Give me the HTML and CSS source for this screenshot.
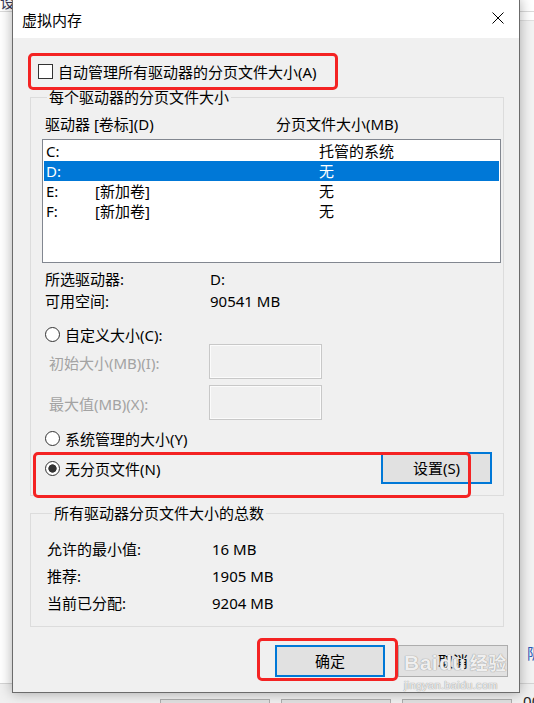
FILE: index.html
```html
<!DOCTYPE html>
<html lang="zh-CN">
<head>
<meta charset="utf-8">
<title>虚拟内存</title>
<link rel="stylesheet" href="styles.css">
</head>
<body>
<div class="screen">
  <div class="bg-head"><span class="bg-glyph">设</span></div>
  <div class="bg-main">
    <div class="bg-right"><span class="bg-link">阪</span></div>
  </div>
  <div class="bg-foot">
    <span class="bg-btn"></span>
    <span class="bg-btn"></span>
    <span class="bg-btn"></span>
    <span class="bg-num">00</span>
  </div>

  <div class="dialog">
    <div class="titlebar">
      <span class="title">虚拟内存</span>
      <svg class="close" width="12" height="12" viewBox="0 0 12 12"><path d="M0.5 0.5L11.5 11.5M11.5 0.5L0.5 11.5" stroke="#000" stroke-width="1" fill="none"/></svg>
    </div>
    <div class="dlg-body">
      <div class="check-row"><span class="checkbox"></span><span>自动管理所有驱动器的分页文件大小(A)</span></div>

      <div class="group group-drives">
        <div class="group-title">每个驱动器的分页文件大小</div>
        <div class="list-head"><span>驱动器 [卷标](D)</span><span>分页文件大小(MB)</span></div>
        <div class="list">
          <div class="list-row"><span>C:</span><span></span><span>托管的系统</span></div>
          <div class="list-row selected"><span>D:</span><span></span><span>无</span></div>
          <div class="list-row"><span>E:</span><span>[新加卷]</span><span>无</span></div>
          <div class="list-row"><span>F:</span><span>[新加卷]</span><span>无</span></div>
        </div>
        <div class="info">
          <span>所选驱动器:</span><span>D:</span>
          <span>可用空间:</span><span>90541 MB</span>
        </div>
        <div class="radio-row r-custom"><span class="radio"></span><span>自定义大小(C):</span></div>
        <div class="field-row"><span class="field-label">初始大小(MB)(I):</span><span class="field-input"></span></div>
        <div class="field-row"><span class="field-label">最大值(MB)(X):</span><span class="field-input"></span></div>
        <div class="radio-row r-system"><span class="radio"></span><span>系统管理的大小(Y)</span></div>
        <div class="radio-row r-none"><span class="radio on"></span><span>无分页文件(N)</span><span class="btn default set-btn">设置(S)</span></div>
      </div>

      <div class="group group-total">
        <div class="group-title">所有驱动器分页文件大小的总数</div>
        <div class="totals">
          <span>允许的最小值:</span><span>16 MB</span>
          <span>推荐:</span><span>1905 MB</span>
          <span>当前已分配:</span><span>9204 MB</span>
        </div>
      </div>

      <div class="actions">
        <span class="btn default">确定</span>
        <span class="btn">取消</span>
      </div>
    </div>
  </div>

  <div class="mark mark-auto"></div>
  <div class="mark mark-none"></div>
  <div class="mark mark-ok"></div>

  <div class="watermark">
    <div class="wm-logo">Bai<span class="wm-du">du</span><span class="wm-jy">经验</span></div>
    <div class="wm-url">jingyan.baidu.com</div>
  </div>
</div>
</body>
</html>
```

FILE: styles.css
```css
* { box-sizing: border-box; }
html, body { margin: 0; padding: 0; }
body {
  font-family: "Noto Sans", "Noto Sans CJK SC", sans-serif;
  font-size: 15px;
  color: #000;
  background: #fff;
}
.screen {
  position: relative;
  width: 534px;
  height: 703px;
  overflow: hidden;
  display: flex;
  flex-direction: column;
  background: #fff;
}

/* underlying window */
.bg-head {
  height: 12px;
  border-bottom: 1px solid #dadada;
  overflow: hidden;
}
.bg-glyph {
  display: block;
  margin-top: -8px;
  line-height: 20px;
  color: #3a3a5a;
}
.bg-main {
  flex: 1;
  display: flex;
  justify-content: flex-end;
}
.bg-right {
  width: 14px;
  background: #f3f3f3;
  border-top: 1px solid #e0e0e0;
  margin-top: 8px;
  display: flex;
  flex-direction: column;
  justify-content: flex-end;
  padding: 0 0 20px 7px;
  overflow: hidden;
}
.bg-link { color: #2a5ab8; line-height: 20px; white-space: nowrap; }
.bg-foot {
  height: 20px;
  border-top: 1px solid #d4d4d4;
  background: #f0f0f0;
  display: flex;
  align-items: flex-start;
  padding: 15px 0 0 160px;
  gap: 11px;
  overflow: hidden;
}
.bg-btn {
  width: 111px;
  height: 20px;
  background: #e1e1e1;
  border: 1px solid #adadad;
}
.bg-num {
  margin: -8px 0 0 auto;
  width: 11px;
  line-height: 20px;
  overflow: hidden;
  color: #222;
}

/* dialog window */
.dialog {
  position: absolute;
  left: 12px;
  top: -1px;
  width: 508px;
  height: 694px;
  border: 1px solid #6b6b6b;
  background: #f0f0f0;
  box-shadow: 0 0 12px rgba(0, 0, 0, 0.32);
  display: flex;
  flex-direction: column;
}
.titlebar {
  height: 38px;
  flex: none;
  background: #fff;
  display: flex;
  justify-content: space-between;
  align-items: flex-start;
  padding: 0 15px 0 9px;
}
.title { line-height: 20px; margin-top: 10px; }
.close { margin-top: 12px; }

.dlg-body {
  flex: 1;
  padding: 23px 11px 0 17px;
}
.check-row {
  display: flex;
  align-items: center;
  height: 20px;
  margin-left: 8px;
  gap: 5px;
}
.checkbox {
  width: 15px;
  height: 15px;
  border: 1px solid #333;
  background: #fff;
}

.group {
  border: 1px solid #dcdcdc;
  margin-right: 4px;
}
.group-title {
  display: block;
  width: fit-content;
  margin: -11px 0 0 5px;
  padding: 0 2px;
  line-height: 20px;
  background: #f0f0f0;
}
.group-drives {
  margin-top: 16px;
  padding: 0 2px 11px 11px;
}
.list-head {
  margin-top: 7px;
  display: grid;
  grid-template-columns: 231px 1fr;
  padding-left: 3px;
  line-height: 20px;
}
.list {
  margin-top: 5px;
  height: 124px;
  border: 1px solid #828790;
  background: #fff;
  padding: 1px;
}
.list-row {
  display: grid;
  grid-template-columns: 49px 224px 1fr;
  height: 20px;
  line-height: 20px;
  padding-left: 2px;
}
.list-row.selected { background: #0078d7; color: #fff; }

.info {
  margin-top: 5px;
  display: grid;
  grid-template-columns: 165px 1fr;
  padding-left: 3px;
  line-height: 22px;
}
.radio-row {
  display: flex;
  align-items: center;
  height: 20px;
  padding-left: 3px;
  gap: 5px;
}
.radio {
  width: 15px;
  height: 15px;
  border: 1px solid #333;
  border-radius: 50%;
  background: #fff;
}
.radio.on {
  background: radial-gradient(circle, #333 0 3.8px, #fff 4.5px);
}
.r-custom { margin-top: 12px; }
.r-system { margin-top: 8px; }
.r-none { margin-top: 4px; height: 32px; }

.field-row {
  display: flex;
  align-items: center;
  height: 35px;
  padding-left: 7px;
  color: #a3a3a3;
}
.field-row + .field-row { margin-top: 6px; }
.field-label { width: 160px; padding-top: 3px; line-height: 20px; }
.field-input {
  width: 113px;
  height: 35px;
  border: 1px solid #c8c8c8;
  box-shadow: inset 0 0 0 1px #fbfbfb;
}

.btn {
  width: 110px;
  height: 32px;
  background: #e1e1e1;
  border: 1px solid #adadad;
  display: flex;
  align-items: center;
  justify-content: center;
  line-height: 20px;
}
.btn.default { border: 2px solid #0078d7; }
.set-btn { width: 111px; margin: 0 9px 0 auto; }

.group-total {
  margin-top: 17px;
  padding: 0 2px 9px 16px;
}
.totals {
  margin-top: 13px;
  display: grid;
  grid-template-columns: 165px 1fr;
  line-height: 27px;
}
.actions {
  margin-top: 18px;
  display: flex;
  justify-content: flex-end;
  gap: 13px;
}

/* red annotation boxes drawn over the screenshot */
.mark {
  position: absolute;
  border: 3px solid #f42323;
  border-radius: 5px;
}
.mark-auto { left: 28px; top: 53px; width: 310px; height: 37px; }
.mark-none { left: 33px; top: 452px; width: 438px; height: 46px; }
.mark-ok { left: 257px; top: 638px; width: 141px; height: 43px; }

/* watermark overlay */
.watermark {
  position: absolute;
  left: 404px;
  top: 651px;
  color: rgba(255, 255, 255, 0.85);
  text-shadow: 0 0 1px #9a9a9a, 0 0 1px #9a9a9a;
  font-family: "Liberation Sans", "Noto Sans CJK SC", sans-serif;
}
.wm-logo { font-size: 21px; font-weight: bold; line-height: 24px; letter-spacing: 0.5px; }
.wm-du { margin-left: 1px; }
.wm-jy { margin-left: 4px; font-size: 18px; }
.wm-url { font-size: 11px; line-height: 12px; margin-top: 3px; letter-spacing: 0.3px; }
```
